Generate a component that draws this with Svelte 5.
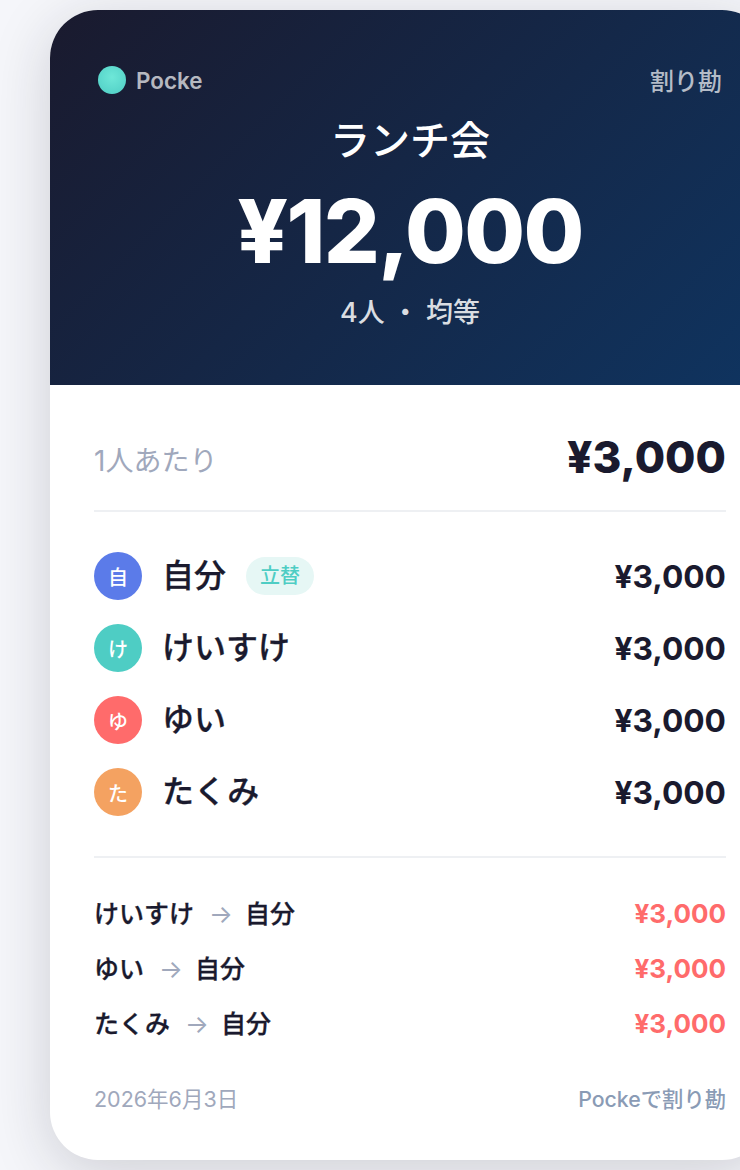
<script>
  const members = [
    { name: '自分', initial: '自', color: '#5b7be9', payer: true },
    { name: 'けいすけ', initial: 'け', color: '#4ecdc4' },
    { name: 'ゆい', initial: 'ゆ', color: '#ff6b6b' },
    { name: 'たくみ', initial: 'た', color: '#f4a261' }
  ]
  const transfers = ['けいすけ', 'ゆい', 'たくみ']
</script>

<div class="page">
  <div class="card">
    <header>
      <div class="topbar">
        <div class="brand"><span class="dot"></span>Pocke</div>
        <div class="kind">割り勘</div>
      </div>
      <h1>ランチ会</h1>
      <div class="total">¥12,000</div>
      <div class="sub">4人 ・ 均等</div>
    </header>

    <div class="body">
      <div class="per">
        <span class="per-label">1人あたり</span>
        <span class="per-value">¥3,000</span>
      </div>

      <div class="members">
        {#each members as m}
          <div class="member">
            <span class="avatar" style="background: {m.color}">{m.initial}</span>
            <span class="name">{m.name}</span>
            {#if m.payer}<span class="badge">立替</span>{/if}
            <span class="amount">¥3,000</span>
          </div>
        {/each}
      </div>

      <div class="transfers">
        {#each transfers as t}
          <div class="transfer">
            <span class="route">{t}<span class="arrow">→</span>自分</span>
            <span class="owed">¥3,000</span>
          </div>
        {/each}
      </div>

      <footer>
        <span class="date">2026年6月3日</span>
        <span class="credit">Pockeで割り勘</span>
      </footer>
    </div>
  </div>
</div>

<style>
  :global(body) { background: #f5f6fa; overflow: hidden; }
  .page { display: flex; width: 740px; height: 1170px; padding: 10px 0 10px 50px; box-sizing: border-box; overflow: hidden; font-family: Inter, "Noto Sans CJK JP", sans-serif; color: #1a1a2e; }
  .card { flex: none; width: 720px; height: 1150px; border-radius: 48px; overflow: hidden; background: #fff; box-shadow: 0 12px 60px rgba(26, 26, 46, 0.18); display: flex; flex-direction: column; }
  header { height: 375px; box-sizing: border-box; padding: 56px 48px 0; background: linear-gradient(135deg, #1a1a2e 0%, #0f3460 100%); text-align: center; color: #fff; }
  .topbar { display: flex; justify-content: space-between; align-items: center; height: 28px; }
  .brand { display: flex; align-items: center; gap: 10px; font-size: 22.4px; font-weight: 600; color: rgba(255, 255, 255, 0.7); }
  .dot { width: 28px; height: 28px; border-radius: 50%; background: radial-gradient(circle at 50% 40%, #6ee7d8, #4ecdc4); }
  .kind { font-size: 24px; font-weight: 500; color: rgba(255, 255, 255, 0.7); margin-top: -2px; }
  h1 { margin: 19px 0 0; font-size: 40px; line-height: 56px; font-weight: 500; }
  .total { margin-top: 10px; font-size: 88px; line-height: 104px; font-weight: 800; letter-spacing: -1.6px; }
  .sub { margin-top: 12px; font-size: 27px; line-height: 36px; font-weight: 500; color: rgba(255, 255, 255, 0.85); }
  .body { flex: 1; padding: 0 44px; }
  .per { display: flex; justify-content: space-between; align-items: center; height: 127px; padding-top: 20px; box-sizing: border-box; border-bottom: 2px solid #eef0f3; }
  .per-label { font-size: 28px; color: #a0a8bc; margin-top: 2px; }
  .per-value { font-size: 44px; font-weight: 800; margin-top: -2px; }
  .members { display: flex; flex-direction: column; gap: 24px; padding: 40px 0; border-bottom: 2px solid #eef0f3; }
  .member { display: flex; align-items: center; height: 48px; }
  .avatar { flex: none; width: 48px; height: 48px; border-radius: 50%; display: flex; align-items: center; justify-content: center; color: #fff; font-size: 20px; font-weight: 500; }
  .name { margin-left: 20px; font-size: 32px; line-height: 48px; font-weight: 500; -webkit-text-stroke: 0.3px #1a1a2e; }
  .badge { margin-left: 20px; padding: 0 14px; height: 38px; line-height: 38px; border-radius: 19px; background: #e6f7f5; color: #4ecdc4; font-size: 20px; font-weight: 500; }
  .amount { margin-left: auto; font-size: 31.7px; font-weight: 700; }
  .transfers { display: flex; flex-direction: column; gap: 17px; padding-top: 36px; }
  .transfer { display: flex; justify-content: space-between; align-items: center; height: 38px; }
  .route { font-size: 25px; font-weight: 500; margin-top: -3px; -webkit-text-stroke: 0.3px #1a1a2e; }
  .arrow { margin: 0 12px 0 15px; color: #a0a8bc; font-weight: 400; -webkit-text-stroke: 0; }
  .owed { font-size: 26px; font-weight: 700; color: #ff6b6b; }
  footer { display: flex; justify-content: space-between; align-items: center; margin-top: 40px; }
  .date { font-size: 21.5px; color: #a0a8bc; }
  .credit { font-size: 21.3px; font-weight: 500; color: #8a9bb5; }
</style>
